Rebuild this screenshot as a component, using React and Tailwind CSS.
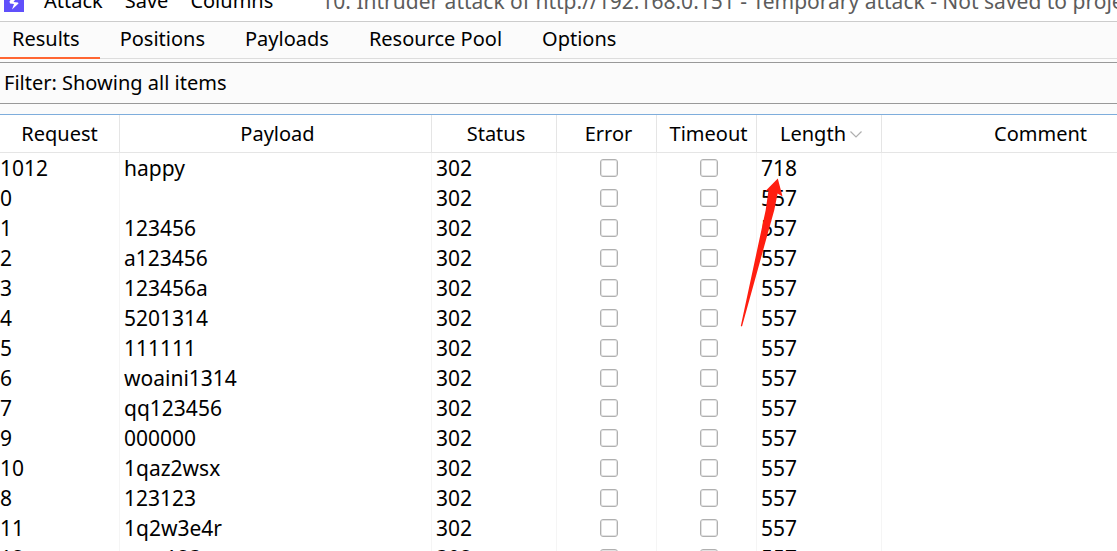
import React, { useState } from "react";

const menus = ["Attack", "Save", "Columns"];

const tabs = ["Results", "Positions", "Payloads", "Resource Pool", "Options"];

const columns = [
  { name: "Request", width: "w-[120px]" },
  { name: "Payload", width: "w-[312px]" },
  { name: "Status", width: "w-[125px]" },
  { name: "Error", width: "w-[100px]" },
  { name: "Timeout", width: "w-[100px]" },
  { name: "Length", width: "w-[125px]", sorted: true },
  { name: "Comment", width: "w-auto" },
];

const results = [
  { request: 1012, payload: "happy", status: 302, length: 718 },
  { request: 0, payload: "", status: 302, length: 557 },
  { request: 1, payload: "123456", status: 302, length: 557 },
  { request: 2, payload: "a123456", status: 302, length: 557 },
  { request: 3, payload: "123456a", status: 302, length: 557 },
  { request: 4, payload: "5201314", status: 302, length: 557 },
  { request: 5, payload: "111111", status: 302, length: 557 },
  { request: 6, payload: "woaini1314", status: 302, length: 557 },
  { request: 7, payload: "qq123456", status: 302, length: 557 },
  { request: 9, payload: "000000", status: 302, length: 557 },
  { request: 10, payload: "1qaz2wsx", status: 302, length: 557 },
  { request: 8, payload: "123123", status: 302, length: 557 },
  { request: 11, payload: "1q2w3e4r", status: 302, length: 557 },
  { request: 12, payload: "qwe123", status: 302, length: 557 },
];

const Logo = () => (
  <svg className="w-5 h-5 shrink-0" viewBox="0 0 20 20" aria-hidden="true">
    <rect width="20" height="20" fill="#6050fb" />
    <path d="M10.5 2 L5.5 9.5 L6 11.5 L10 12 L8 17.5 L14.5 11.5 L14 10.5 L9.5 10 L11 8 Z" fill="#fff" />
  </svg>
);

const SortIcon = () => (
  <svg className="w-3 h-2" viewBox="0 0 12 8" fill="none" aria-hidden="true">
    <path d="M0.5 1.5 L6 7 L11.5 1.5" stroke="#afafaf" strokeWidth="1.2" />
  </svg>
);

const CheckCell = ({ label }) => (
  <td className="p-0 pl-1 border-r border-[#f5f5f5]">
    <input
      type="checkbox"
      aria-label={label}
      className="block mx-auto w-[18px] h-[18px] appearance-none rounded-[3px] border border-[#b0b0b0] bg-white shadow-[inset_0_0_0_1px_#e2e2e2] checked:bg-[#b0b0b0]"
    />
  </td>
);

const Arrow = () => (
  <svg
    className="absolute left-[740px] top-[63px] w-[43px] h-[150px] pointer-events-none"
    viewBox="0 0 43 150"
    aria-hidden="true"
  >
    <path
      d="M37.8 0.5 L42.5 18.5 L37.6 15.5 L34.3 32 L2 148.5 L0.8 148 L25.7 32 L28.5 12.5 L25.5 13 Z"
      fill="#ff1e10"
    />
  </svg>
);

const App = () => {
  const [activeTab, setActiveTab] = useState("Results");

  return (
    <div className="h-screen flex flex-col overflow-hidden bg-[#fbfbfb] text-black text-[20px] leading-[30px] font-['Noto_Sans','Noto_Sans_CJK_SC',sans-serif]">
      {/* Title bar */}
      <header className="h-[22px] shrink-0 flex flex-col justify-end overflow-hidden bg-white border-b border-[#cccccc]">
        <div className="h-[38px] shrink-0 flex items-center pl-1 whitespace-nowrap">
          <Logo />
          <nav className="flex gap-[22px] pl-5 pb-0.5">
            {menus.map((menu) => (
              <button key={menu} type="button">
                {menu}
              </button>
            ))}
          </nav>
          <h1 className="pl-12 pb-0.5 text-[21px] text-[#5c5c5c]">
            10. Intruder attack of http://192.168.0.151 - Temporary attack - Not saved to project file
          </h1>
        </div>
      </header>

      {/* Tabs */}
      <div role="tablist" className="h-[37px] shrink-0 flex border-b border-[#dddddd] whitespace-nowrap">
        {tabs.map((tab) => (
          <button
            key={tab}
            type="button"
            role="tab"
            aria-selected={activeTab === tab}
            onClick={() => setActiveTab(tab)}
            className={`h-[37px] px-5 pb-0.5 first:pl-3 border-b-2 ${
              activeTab === tab ? "border-[#ff6633]" : "border-transparent"
            }`}
          >
            {tab}
          </button>
        ))}
      </div>

      {/* Filter */}
      <button
        type="button"
        className="h-[42px] mt-[3px] mb-[10px] px-1 shrink-0 text-left border-y border-[#999999]"
      >
        Filter: Showing all items
      </button>

      {/* Results table */}
      <div className="relative flex-1 min-h-0 overflow-hidden bg-white border-t border-[#7eaddc]">
        <table className="table-fixed border-separate border-spacing-0 w-full min-w-[1196px]">
          <thead>
            <tr className="h-[38px]">
              {columns.map((col) => (
                <th
                  key={col.name}
                  scope="col"
                  className={`${col.width} p-0 pl-1 first:pl-0 font-normal border-r border-b border-[#e5e5e5]`}
                >
                  <div className="flex items-center justify-center gap-1">
                    {col.name}
                    {col.sorted && <SortIcon />}
                  </div>
                </th>
              ))}
            </tr>
          </thead>
          <tbody className="text-[21px]">
            {results.map((row) => (
              <tr key={row.request} className="h-[30px]">
                <td className="p-0 border-r border-[#f5f5f5]">{row.request}</td>
                <td className="p-0 pl-1 border-r border-[#f5f5f5]">{row.payload}</td>
                <td className="p-0 pl-1 border-r border-[#f5f5f5]">{row.status}</td>
                <CheckCell label={`Error for request ${row.request}`} />
                <CheckCell label={`Timeout for request ${row.request}`} />
                <td className="p-0 pl-1 border-r border-[#f5f5f5]">{row.length}</td>
                <td className="p-0" />
              </tr>
            ))}
          </tbody>
        </table>
        <Arrow />
      </div>
    </div>
  );
};

export default App;
